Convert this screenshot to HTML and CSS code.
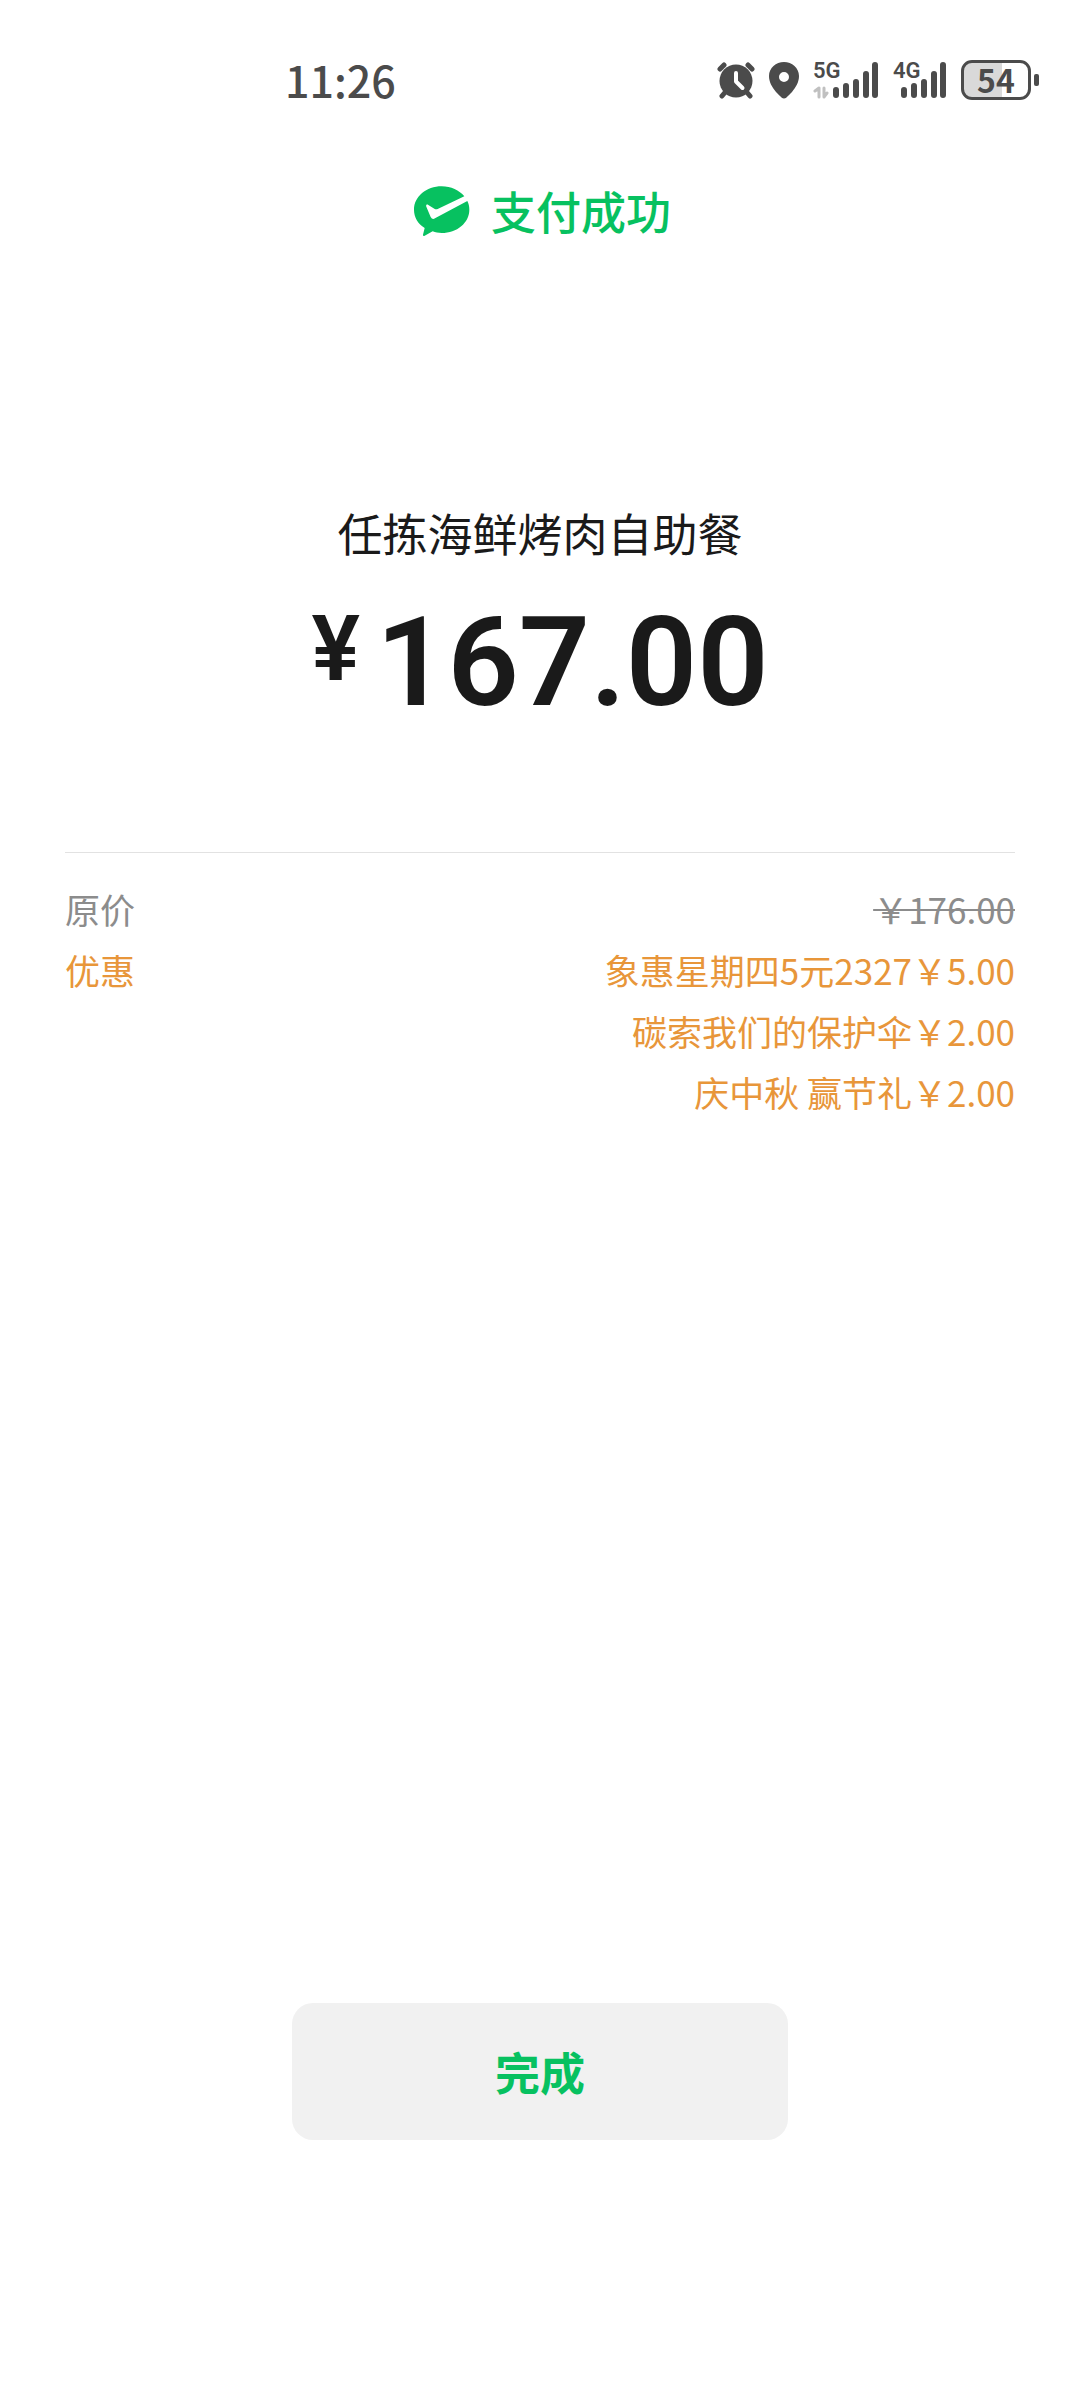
FILE: index.html
```html
<!DOCTYPE html>
<html lang="zh-CN">
<head>
<meta charset="utf-8">
<meta name="viewport" content="width=device-width, initial-scale=1">
<title>支付成功</title>
<link rel="stylesheet" href="styles.css">
</head>
<body>
<div class="page">
  <div class="status-bar">
    <time class="clock">11:26</time>
    <div class="status-icons">
      <svg class="icon-alarm" width="38" height="38" viewBox="0 0 38 38" aria-hidden="true">
        <g stroke="#4b4b4b" stroke-width="5" stroke-linecap="round">
          <path d="M3 8 7 4M31 4l4 4M10 29l-5 6M28 29l5 6"/>
        </g>
        <circle cx="19" cy="20" r="16.500" fill="#4b4b4b"/>
        <path d="M19 12v8.500l6.500 6.500" fill="none" stroke="#fff" stroke-width="4" stroke-linecap="round" stroke-linejoin="round"/>
      </svg>
      <svg class="icon-pin" width="30" height="38" viewBox="0 0 30 38" aria-hidden="true">
        <path fill="#4b4b4b" fill-rule="evenodd" d="M15 1C7 1 0 7 0 15c0 6 3 11 7 16 2 2 4 4 5.500 5.500q2.500 2 5 0C19 35 21 33 23 31c4-5 7-10 7-16C30 7 23 1 15 1Zm0 10a5 5 0 1 1 0 10 5 5 0 0 1 0-10Z"/>
      </svg>
      <div class="signal">
        <span class="net">5G</span>
        <svg width="66" height="38" viewBox="0 0 66 38" aria-hidden="true">
          <path fill="none" stroke="#c0c0c0" stroke-width="3" stroke-linecap="round" stroke-linejoin="round" d="M2 30l4-3v9M11 27v9l3-4"/>
          <path stroke="#4b4b4b" stroke-width="6" stroke-linecap="round" d="M23 29v5M33 25v9M43 21v13M53 13v21M62 4v30"/>
        </svg>
      </div>
      <div class="signal">
        <span class="net">4G</span>
        <svg width="54" height="38" viewBox="0 0 54 38" aria-hidden="true">
          <path stroke="#4b4b4b" stroke-width="6" stroke-linecap="round" d="M11 29v5M21 25v9M31 21v13M41 13v21M50 4v30"/>
        </svg>
      </div>
      <div class="battery"><span class="battery-level">54</span></div>
    </div>
  </div>

  <header class="result">
    <svg width="56" height="50" viewBox="42 46 168 150" aria-hidden="true">
      <path fill="#07c160" d="M125 47c-46 0-83 31-83 70 0 23 12 42 32 55l-5 20c-1 3 2 5 5 3l24-13c8 3 17 5 27 5 46 0 83-31 83-70 0-10-2-18-6-26l-97 52q-8 5-13-4L79 108c-2-5 2-8 6-5l18 11q5 3 10 1l80-38c-15-18-40-30-68-30Z"/>
    </svg>
    <h1 class="result-text">支付成功</h1>
  </header>

  <main class="content">
    <section class="payment">
      <h2 class="merchant">任拣海鲜烤肉自助餐</h2>
      <p class="amount"><span class="currency">¥</span><span>167.00</span></p>
    </section>
    <dl class="details">
      <div class="row row-original">
        <dt>原价</dt>
        <dd><del>￥176.00</del></dd>
      </div>
      <div class="row row-discount">
        <dt>优惠</dt>
        <dd>象惠星期四5元2327￥5.00</dd>
        <dd>碳索我们的保护伞￥2.00</dd>
        <dd>庆中秋 赢节礼￥2.00</dd>
      </div>
    </dl>
  </main>

  <footer class="actions">
    <button class="done" type="button">完成</button>
  </footer>
</div>
</body>
</html>
```
FILE: styles.css
```css
* { box-sizing: border-box; }

body,
h1,
h2,
p,
dl,
dd {
  margin: 0;
}

body {
  background: #fff;
  color: #1a1a1a;
  font-family: "Noto Sans CJK SC", sans-serif;
}

.page {
  display: flex;
  flex-direction: column;
  min-height: 100vh;
}

.status-bar {
  display: flex;
  align-items: center;
  justify-content: space-between;
  height: 160px;
  padding: 0 49px 0 285px;
  color: #4b4b4b;
}

.clock {
  font-size: 43px;
  font-weight: 500;
  line-height: 60px;
  padding-bottom: 2px;
}

.status-icons {
  display: flex;
  align-items: center;
  gap: 14px;
}

.signal { position: relative; }
.signal svg { display: block; }

.net {
  position: absolute;
  top: -3px;
  left: 0;
  font-family: Roboto, sans-serif;
  font-size: 22px;
  font-weight: 600;
  line-height: 26px;
}

.battery {
  position: relative;
  width: 70px;
  height: 40px;
  border: 3px solid #4b4b4b;
  border-radius: 11px;
  background: linear-gradient(to right, #d9d9d9 60%, #fff 60%);
  text-align: center;
}

.battery::after {
  content: "";
  position: absolute;
  top: 11px;
  right: -11px;
  width: 5px;
  height: 12px;
  border-radius: 2px;
  background: #4b4b4b;
}

.battery-level {
  display: block;
  font-size: 32px;
  font-weight: 700;
  line-height: 32px;
}

.result {
  display: flex;
  align-items: center;
  justify-content: center;
  gap: 21px;
  height: 104px;
  padding: 0 0 2px 5px;
  color: #07c160;
}

.result-text {
  font-size: 45px;
  font-weight: 500;
  line-height: 60px;
}

.content {
  flex: 1;
  padding: 236px 65px 0;
}

.payment {
  padding-bottom: 110px;
  border-bottom: 1px solid #e2e2e2;
  text-align: center;
}

.merchant {
  margin-bottom: 18px;
  font-size: 45px;
  font-weight: 400;
  line-height: 66px;
}

.amount {
  display: flex;
  justify-content: center;
  gap: 16px;
  font-family: Roboto, sans-serif;
  font-size: 125px;
  font-weight: 600;
  line-height: 158px;
}

.currency {
  font-size: 91px;
  line-height: 130px;
}

.details {
  padding-top: 25px;
  font-size: 35px;
  line-height: 61px;
}

.row {
  display: grid;
  grid-template-columns: auto 1fr;
  text-align: right;
}

.row dt { text-align: left; }
.row dd { grid-column: 2; }

.row-original { color: #8c8c8c; }
.row-discount { color: #e8963a; }

.row-original del { text-decoration-thickness: 2px; }

.actions {
  display: flex;
  justify-content: center;
  padding-bottom: 260px;
}

.done {
  width: 46%;
  height: 137px;
  border: 0;
  border-radius: 21px;
  background: #f1f1f1;
  color: #07c160;
  font: 700 45px "Noto Sans CJK SC", sans-serif;
}
```
